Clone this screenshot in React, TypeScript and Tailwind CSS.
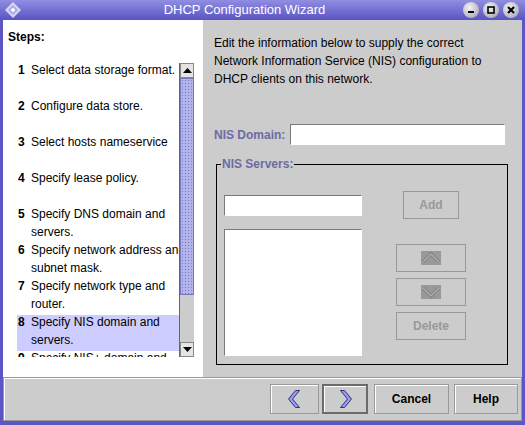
import React from 'react';

type Step = { n: string; lines: string[] };

const steps: Step[] = [
    { n: '1', lines: ['Select data storage format.'] },
    { n: '2', lines: ['Configure data store.'] },
    { n: '3', lines: ['Select hosts nameservice'] },
    { n: '4', lines: ['Specify lease policy.'] },
    { n: '5', lines: ['Specify DNS domain and', 'servers.'] },
    { n: '6', lines: ['Specify network address and', 'subnet mask.'] },
    { n: '7', lines: ['Specify network type and', 'router.'] },
    { n: '8', lines: ['Specify NIS domain and', 'servers.'] },
    { n: '9', lines: ['Specify NIS+ domain and', 'servers.'] }
];

const ACTIVE = '8';

const Chevron: React.FC<{ dir: 'left' | 'right' }> = ({ dir }) => (
    <svg width="13" height="18" viewBox="0 0 13 18">
        {dir === 'left' ? (
            <polygon
                points="11.5,0.5 4.5,9 11.5,17.5 7.5,17.5 0.5,9 7.5,0.5"
                fill="#9999ff"
                stroke="#333366"
                strokeWidth="1"
            />
        ) : (
            <polygon
                points="1.5,0.5 8.5,9 1.5,17.5 5.5,17.5 12.5,9 5.5,0.5"
                fill="#9999ff"
                stroke="#333366"
                strokeWidth="1"
            />
        )}
    </svg>
);

const MoveIcon: React.FC<{ dir: 'up' | 'down' }> = ({ dir }) => {
    const pts = dir === 'up' ? '2,11 10,3 18,11' : '2,3 10,11 18,3';
    return (
        <svg width="20" height="14" viewBox="0 0 20 14">
            <rect x="0" y="0" width="20" height="14" fill="#999999" />
            <polyline points={pts} fill="none" stroke="#858585" strokeWidth="3.4" />
            <polyline points={pts} fill="none" stroke="#b0b0b0" strokeWidth="1.2" />
        </svg>
    );
};

const TitleButton: React.FC<{ kind: 'min' | 'max' | 'close' }> = ({ kind }) => (
    <div className="w-[16px] h-[16px] rounded-full bg-[radial-gradient(circle_at_40%_35%,#f4f4f4,#b4b4c0_70%,#8c8ca0)] flex items-center justify-center">
        <svg width="10" height="10" viewBox="0 0 10 10">
            {kind === 'min' && <rect x="2" y="6" width="6" height="2" fill="#000" />}
            {kind === 'max' && (
                <rect x="2" y="2" width="6" height="6" fill="none" stroke="#000" strokeWidth="1.6" />
            )}
            {kind === 'close' && (
                <path d="M2 2 L8 8 M8 2 L2 8" stroke="#000" strokeWidth="2.2" />
            )}
        </svg>
    </div>
);

const App: React.FC = () => {
    return (
        <div className="w-[525px] h-[425px] bg-[#5b56c4] flex flex-col font-['Liberation_Sans',Arial,sans-serif] text-[12px] text-black overflow-hidden">
            {/* title bar */}
            <div className="h-[20px] flex items-center bg-gradient-to-b from-[#918de2] to-[#5a54c2]">
                <div className="w-[26px] pl-[5px] flex items-center">
                    <svg width="16" height="16" viewBox="0 0 16 16">
                        <polygon points="8,0 16,8 8,16 0,8" fill="#d8d6f4" />
                        <polygon points="8,3 13,8 8,13 3,8" fill="#a9a5e6" />
                        <polygon points="8,5.5 10.5,8 8,10.5 5.5,8" fill="#ffffff" />
                    </svg>
                </div>
                <div className="flex-1 text-center text-white text-[13px] leading-[20px]">
                    DHCP Configuration Wizard
                </div>
                <div className="flex items-center gap-[4px] pr-[6px]">
                    <TitleButton kind="min" />
                    <TitleButton kind="max" />
                    <TitleButton kind="close" />
                </div>
            </div>

            <div className="flex-1 mx-[3px] mb-[4px] flex flex-col bg-[#cccccc]">
                <div className="h-[357px] flex">
                    {/* steps panel */}
                    <div className="w-[200px] bg-white flex flex-col">
                        <div className="pl-[5px] pt-[9px] h-[43px] font-bold leading-[16px]">Steps:</div>
                        <div className="ml-[14px] h-[294px] flex">
                            <div className="w-[162px] h-[294px] overflow-hidden">
                                {steps.map((s) => (
                                    <div
                                        key={s.n}
                                        className={`h-[36px] flex whitespace-nowrap ${
                                            s.n === ACTIVE ? 'bg-[#ccccff]' : ''
                                        }`}
                                    >
                                        <div className="w-[14px] shrink-0 pl-[1px] font-bold leading-[18px] -mt-[2px]">
                                            {s.n}
                                        </div>
                                        <div className="shrink-0 leading-[18px] -mt-[2px]">
                                            {s.lines.map((l) => (
                                                <div key={l}>{l}</div>
                                            ))}
                                        </div>
                                    </div>
                                ))}
                            </div>
                            {/* scrollbar */}
                            <div className="w-[15px] h-[294px] flex flex-col border-l border-[#666666] bg-[#cccccc]">
                                <div className="h-[15px] bg-[#e4e4e4] border border-[#888888] flex items-center justify-center">
                                    <svg width="9" height="5" viewBox="0 0 9 5">
                                        <polygon points="0,5 4.5,0 9,5" fill="#000" />
                                    </svg>
                                </div>
                                <div className="h-[217px] border border-[#7777bb] bg-[#b4b4ec] bg-[radial-gradient(circle,#7a7ac4_0.7px,transparent_1px)] bg-[length:3px_3px]" />
                                <div className="flex-1" />
                                <div className="h-[15px] bg-[#e4e4e4] border border-[#888888] flex items-center justify-center">
                                    <svg width="9" height="5" viewBox="0 0 9 5">
                                        <polygon points="0,0 4.5,5 9,0" fill="#000" />
                                    </svg>
                                </div>
                            </div>
                        </div>
                    </div>

                    {/* content panel */}
                    <div className="flex-1 pl-[11px] pt-[14px]">
                        <p className="leading-[18px]">
                            Edit the information below to supply the correct
                            <br />
                            Network Information Service (NIS) configuration to
                            <br />
                            DHCP clients on this network.
                        </p>
                        <div className="mt-[36px] flex items-center">
                            <span className="w-[76px] font-bold text-[#6b6ba6]">NIS Domain:</span>
                            <div className="w-[215px] h-[21px] bg-white border border-[#7a7a7a] border-r-white border-b-white" />
                        </div>
                        <div className="relative mt-[19px] ml-[2px] w-[292px] h-[201px] border border-black flex pl-[7px]">
                            <span className="absolute -top-[9px] left-[4px] px-[1px] bg-[#cccccc] font-bold text-[#6b6ba6] leading-[16px]">
                                NIS Servers:
                            </span>
                            <div className="w-[138px] pt-[30px] flex flex-col gap-[13px]">
                                <div className="h-[21px] bg-white border border-[#7a7a7a] border-r-white border-b-white" />
                                <div className="h-[127px] bg-white border border-[#7a7a7a] border-r-white border-b-white" />
                            </div>
                            <div className="ml-[34px] w-[70px] pt-[26px] flex flex-col items-center">
                                <div className="w-[56px] h-[28px] border border-[#999999] flex items-center justify-center font-bold text-[#999999]">
                                    Add
                                </div>
                                <div className="mt-[25px] w-[70px] h-[28px] border border-[#999999] flex items-center justify-center">
                                    <MoveIcon dir="up" />
                                </div>
                                <div className="mt-[6px] w-[70px] h-[28px] border border-[#999999] flex items-center justify-center">
                                    <MoveIcon dir="down" />
                                </div>
                                <div className="mt-[6px] w-[70px] h-[28px] border border-[#999999] flex items-center justify-center font-bold text-[#999999]">
                                    Delete
                                </div>
                            </div>
                        </div>
                    </div>
                </div>

                {/* button bar */}
                <div className="flex-1 border border-[#999999] shadow-[inset_1px_1px_0_#ffffff] flex items-center justify-end pr-[3px]">
                    <div className="w-[49px] h-[30px] border border-[#999999] shadow-[inset_1px_1px_0_#ffffff] flex items-center justify-center">
                        <Chevron dir="left" />
                    </div>
                    <div className="ml-[3px] w-[46px] h-[30px] border-2 border-[#6b6b6b] shadow-[inset_1px_1px_0_#ffffff] flex items-center justify-center">
                        <Chevron dir="right" />
                    </div>
                    <div className="ml-[6px] w-[75px] h-[30px] border border-[#999999] shadow-[inset_1px_1px_0_#ffffff] flex items-center justify-center font-bold">
                        Cancel
                    </div>
                    <div className="ml-[5px] w-[64px] h-[30px] border border-[#999999] shadow-[inset_1px_1px_0_#ffffff] flex items-center justify-center font-bold">
                        Help
                    </div>
                </div>
            </div>
        </div>
    );
};

export default App;
